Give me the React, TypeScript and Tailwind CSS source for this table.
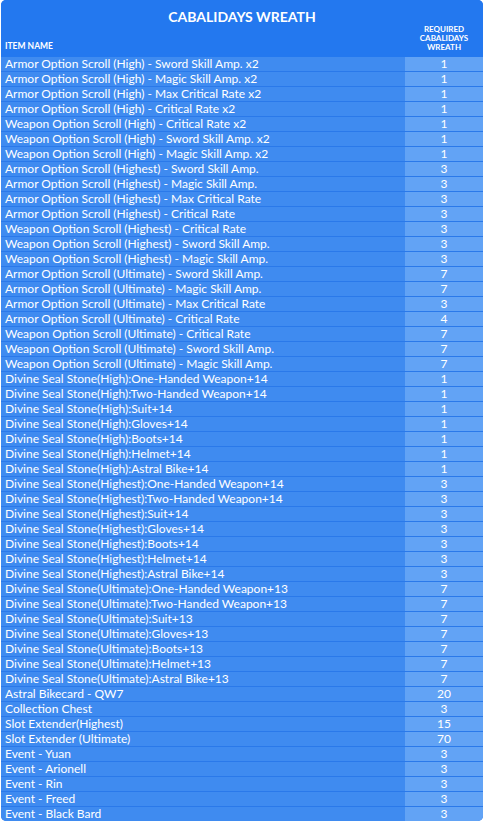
/**
 * Cabalidays Wreath 兑换表
 * 表头 + 物品名称 / 所需数量 两列
 */

/* ========== 数据 ========== */

const ROWS: [string, number][] = [
  ["Armor Option Scroll (High) - Sword Skill Amp. x2", 1],
  ["Armor Option Scroll (High) - Magic Skill Amp. x2", 1],
  ["Armor Option Scroll (High) - Max Critical Rate x2", 1],
  ["Armor Option Scroll (High) - Critical Rate x2", 1],
  ["Weapon Option Scroll (High) - Critical Rate x2", 1],
  ["Weapon Option Scroll (High) - Sword Skill Amp. x2", 1],
  ["Weapon Option Scroll (High) - Magic Skill Amp. x2", 1],
  ["Armor Option Scroll (Highest) - Sword Skill Amp.", 3],
  ["Armor Option Scroll (Highest) - Magic Skill Amp.", 3],
  ["Armor Option Scroll (Highest) - Max Critical Rate", 3],
  ["Armor Option Scroll (Highest) - Critical Rate", 3],
  ["Weapon Option Scroll (Highest) - Critical Rate", 3],
  ["Weapon Option Scroll (Highest) - Sword Skill Amp.", 3],
  ["Weapon Option Scroll (Highest) - Magic Skill Amp.", 3],
  ["Armor Option Scroll (Ultimate) - Sword Skill Amp.", 7],
  ["Armor Option Scroll (Ultimate) - Magic Skill Amp.", 7],
  ["Armor Option Scroll (Ultimate) - Max Critical Rate", 3],
  ["Armor Option Scroll (Ultimate) - Critical Rate", 4],
  ["Weapon Option Scroll (Ultimate) - Critical Rate", 7],
  ["Weapon Option Scroll (Ultimate) - Sword Skill Amp.", 7],
  ["Weapon Option Scroll (Ultimate) - Magic Skill Amp.", 7],
  ["Divine Seal Stone(High):One-Handed Weapon+14", 1],
  ["Divine Seal Stone(High):Two-Handed Weapon+14", 1],
  ["Divine Seal Stone(High):Suit+14", 1],
  ["Divine Seal Stone(High):Gloves+14", 1],
  ["Divine Seal Stone(High):Boots+14", 1],
  ["Divine Seal Stone(High):Helmet+14", 1],
  ["Divine Seal Stone(High):Astral Bike+14", 1],
  ["Divine Seal Stone(Highest):One-Handed Weapon+14", 3],
  ["Divine Seal Stone(Highest):Two-Handed Weapon+14", 3],
  ["Divine Seal Stone(Highest):Suit+14", 3],
  ["Divine Seal Stone(Highest):Gloves+14", 3],
  ["Divine Seal Stone(Highest):Boots+14", 3],
  ["Divine Seal Stone(Highest):Helmet+14", 3],
  ["Divine Seal Stone(Highest):Astral Bike+14", 3],
  ["Divine Seal Stone(Ultimate):One-Handed Weapon+13", 7],
  ["Divine Seal Stone(Ultimate):Two-Handed Weapon+13", 7],
  ["Divine Seal Stone(Ultimate):Suit+13", 7],
  ["Divine Seal Stone(Ultimate):Gloves+13", 7],
  ["Divine Seal Stone(Ultimate):Boots+13", 7],
  ["Divine Seal Stone(Ultimate):Helmet+13", 7],
  ["Divine Seal Stone(Ultimate):Astral Bike+13", 7],
  ["Astral Bikecard - QW7", 20],
  ["Collection Chest", 3],
  ["Slot Extender(Highest)", 15],
  ["Slot Extender (Ultimate)", 70],
  ["Event - Yuan", 3],
  ["Event - Arionell", 3],
  ["Event - Rin", 3],
  ["Event - Freed", 3],
  ["Event - Black Bard", 3],
]

/* ========== 主组件 ========== */

export default function App() {
  return (
    <div className="bg-white w-[484px] h-[821px] overflow-hidden font-['Lato','Noto_Sans',sans-serif] text-white">
      <div className="ml-[1px] w-[482px] h-[821px] rounded-[5px] overflow-hidden bg-[#2a79ea]">
        {/* 表头 */}
        <div className="h-[57px] bg-[#2378ef] flex">
          <div className="flex-1 flex flex-col">
            <div className="pt-[8px] pl-[78px] text-center text-[14px] font-bold leading-[18px]">
              CABALIDAYS WREATH
            </div>
            <div className="mt-auto pb-[6px] pl-[4px] text-[8.5px] font-bold leading-[10px]">
              ITEM NAME
            </div>
          </div>
          <div className="w-[78px] flex flex-col justify-end pb-[5px] text-center text-[8px] font-bold leading-[9px]">
            <span>REQUIRED</span>
            <span>CABALIDAYS</span>
            <span>WREATH</span>
          </div>
        </div>

        {/* 数据行 */}
        {ROWS.map(([name, qty], i) => (
          <div
            key={i}
            className="grid grid-cols-[404px_1fr] h-[15px] border-b border-[#2a79ea] text-[12px] leading-[14px]"
          >
            <div className="bg-[#3f8bf0] pl-[4px] whitespace-nowrap overflow-hidden">{name}</div>
            <div className="bg-[#62a3f5] text-center">{qty}</div>
          </div>
        ))}
      </div>
    </div>
  )
}
